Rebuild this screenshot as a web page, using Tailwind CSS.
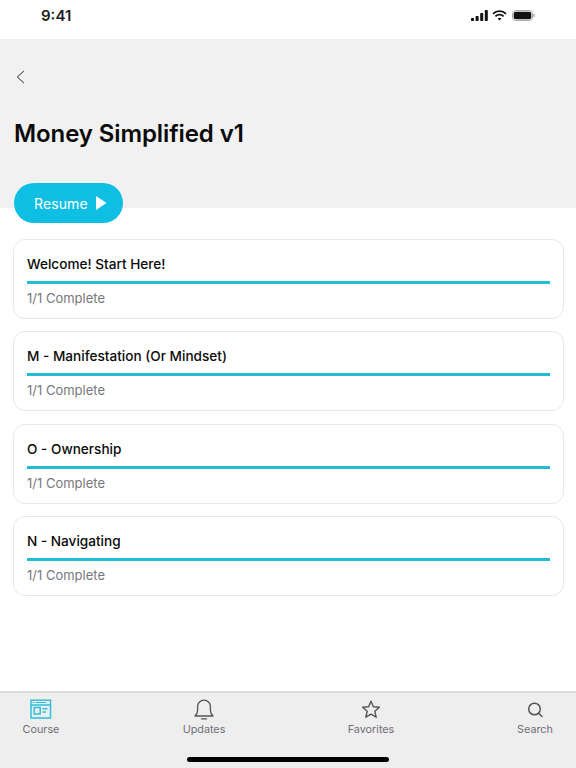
<!DOCTYPE html>
<html><head><meta charset="utf-8">
<script src="https://cdn.jsdelivr.net/npm/@tailwindcss/browser@4"></script>
</head>
<body class="bg-white">
<div class="w-[576px] h-[768px] overflow-hidden flex flex-col font-['Inter',sans-serif] antialiased bg-white">
  <div class="h-[39px] shrink-0 flex items-center justify-between pl-[41px] pr-[41px] pb-[8px]">
    <span class="text-[15px] font-semibold text-[#1c1c1e] leading-none">9:41</span>
    <div class="flex items-center gap-[4px]">
      <svg width="17" height="11" viewBox="0 0 17 11" fill="#111"><rect x="0" y="8" width="3" height="3" rx=".7"/><rect x="4.6" y="6" width="3" height="5" rx=".7"/><rect x="9.2" y="3" width="3" height="8" rx=".7"/><rect x="13.8" y="0" width="3" height="11" rx=".7"/></svg>
      <svg width="15" height="11" viewBox="0 0 15 11" fill="none" stroke="#111" stroke-width="1.9"><path d="M1 3.8a9.2 9.2 0 0 1 13 0"/><path d="M3.4 6.3a5.8 5.8 0 0 1 8.2 0"/><path d="M7.5 10.6 5.6 8.6a2.7 2.7 0 0 1 3.8 0z" fill="#111" stroke="none"/></svg>
      <svg width="23" height="11" viewBox="0 0 23 11" class="ml-[1px]"><rect x=".5" y=".5" width="20" height="10" rx="3" fill="none" stroke="#aaa"/><rect x="1.7" y="1.7" width="17.6" height="7.6" rx="2" fill="#111"/><rect x="21.3" y="3.7" width="1.4" height="3.6" rx=".7" fill="#aaa"/></svg>
    </div>
  </div>
  <div class="h-[169px] shrink-0 bg-[#f1f1f2] pl-[14px] flex flex-col">
    <svg class="mt-[31px] ml-[2px]" width="9" height="14" viewBox="0 0 9 14" fill="none" stroke="#222" stroke-width="1"><path d="M7.8 1 1.4 7l6.4 6"/></svg>
    <h1 class="mt-[34px] text-[24px] leading-[32px] font-semibold text-[#0a0a0a] tracking-[-0.1px]">Money Simplified v1</h1>
  </div>
  <div class="-mt-[25px] ml-[14px] w-[109px] h-[40px] shrink-0 rounded-full bg-[#0fbfe3] flex items-center pl-[20px] gap-[8px] text-white text-[14px] tracking-[0.1px]">
    <span>Resume</span>
    <svg width="11" height="14" viewBox="0 0 11 14" fill="#fff"><path d="M0 0 10.500 7 0 14z"/></svg>
  </div>
  <div class="mt-[16px] ml-[13px] mr-[12.5px] flex flex-col gap-[12.3px]">
    <div class="h-[80px] rounded-[12px] border-[1.5px] border-[#e8e8e8] px-[13px] pt-[15px]">
      <p class="text-[13.6px] leading-[18px] font-medium text-[#0a0a0a]">Welcome! Start Here!</p>
      <div class="mt-[8px] h-[3px] bg-[#22bcd6]"></div>
      <p class="mt-[5px] text-[13px] leading-[18px] text-[#77777c]">1/1 Complete</p>
    </div>
    <div class="h-[80px] rounded-[12px] border-[1.5px] border-[#e8e8e8] px-[13px] pt-[15px]">
      <p class="text-[13.6px] leading-[18px] font-medium text-[#0a0a0a]">M - Manifestation (Or Mindset)</p>
      <div class="mt-[8px] h-[3px] bg-[#22bcd6]"></div>
      <p class="mt-[5px] text-[13px] leading-[18px] text-[#77777c]">1/1 Complete</p>
    </div>
    <div class="h-[80px] rounded-[12px] border-[1.5px] border-[#e8e8e8] px-[13px] pt-[15px]">
      <p class="text-[13.6px] leading-[18px] font-medium text-[#0a0a0a]">O - Ownership</p>
      <div class="mt-[8px] h-[3px] bg-[#22bcd6]"></div>
      <p class="mt-[5px] text-[13px] leading-[18px] text-[#77777c]">1/1 Complete</p>
    </div>
    <div class="h-[80px] rounded-[12px] border-[1.5px] border-[#e8e8e8] px-[13px] pt-[15px]">
      <p class="text-[13.6px] leading-[18px] font-medium text-[#0a0a0a]">N - Navigating</p>
      <div class="mt-[8px] h-[3px] bg-[#22bcd6]"></div>
      <p class="mt-[5px] text-[13px] leading-[18px] text-[#77777c]">1/1 Complete</p>
    </div>
  </div>
  <div class="mt-auto h-[77px] shrink-0 bg-[#eeeeef] border-t-2 border-[#dcdcdc] relative text-[10.8px] leading-[14px] text-[#6f6f74]">
    <div class="flex pl-[18px] pt-[6px]">
      <div class="flex flex-col items-center w-[46px]">
        <svg width="22" height="22" viewBox="0 0 22 22" fill="none" stroke="#2cc0dc" stroke-width="1.5"><rect x="1" y="1.200" width="19.500" height="17.800"/><path d="M1 6h19.500" /><path d="M2.500 3.500h2M6 3.500h10" stroke-width="1"/><rect x="4.200" y="8.500" width="6" height="6.500"/><path d="M12.500 9.800h5M12.500 13h3.500"/></svg>
        <span class="mt-[2px]">Course</span>
      </div>
      <div class="flex flex-col items-center w-[46px] ml-[117px]">
        <svg width="22" height="22" viewBox="0 0 22 22" fill="none" stroke="#55555a" stroke-width="1.3"><path d="M2 17c1.600-1.500 2.600-3 2.600-6V7.500a6.400 6.400 0 0 1 12.800 0V11c0 3 1 4.500 2.600 6z" stroke-linejoin="round"/><path d="M8.500 19.800h5" stroke-linecap="round"/></svg>
        <span class="mt-[2px]">Updates</span>
      </div>
      <div class="flex flex-col items-center w-[46px] ml-[121px]">
        <svg width="22" height="22" viewBox="0 0 22 22" fill="none" stroke="#55555a" stroke-width="1.4"><path d="m11 2.200 2.400 5.600 6 .5-4.600 4 1.400 5.900-5.200-3.100-5.200 3.100 1.400-5.900-4.600-4 6-.5z" stroke-linejoin="round"/></svg>
        <span class="mt-[2px]">Favorites</span>
      </div>
      <div class="flex flex-col items-center w-[46px] ml-[118px]">
        <svg width="22" height="22" viewBox="0 0 22 22" fill="none" stroke="#55555a" stroke-width="1.5"><circle cx="10.500" cy="10" r="5.800"/><path d="m14.700 14.200 3.300 3.300" stroke-linecap="round"/></svg>
        <span class="mt-[2px]">Search</span>
      </div>
    </div>
    <div class="absolute left-[187px] top-[64px] w-[202px] h-[5px] rounded-full bg-black"></div>
  </div>
</div>
</body></html>
